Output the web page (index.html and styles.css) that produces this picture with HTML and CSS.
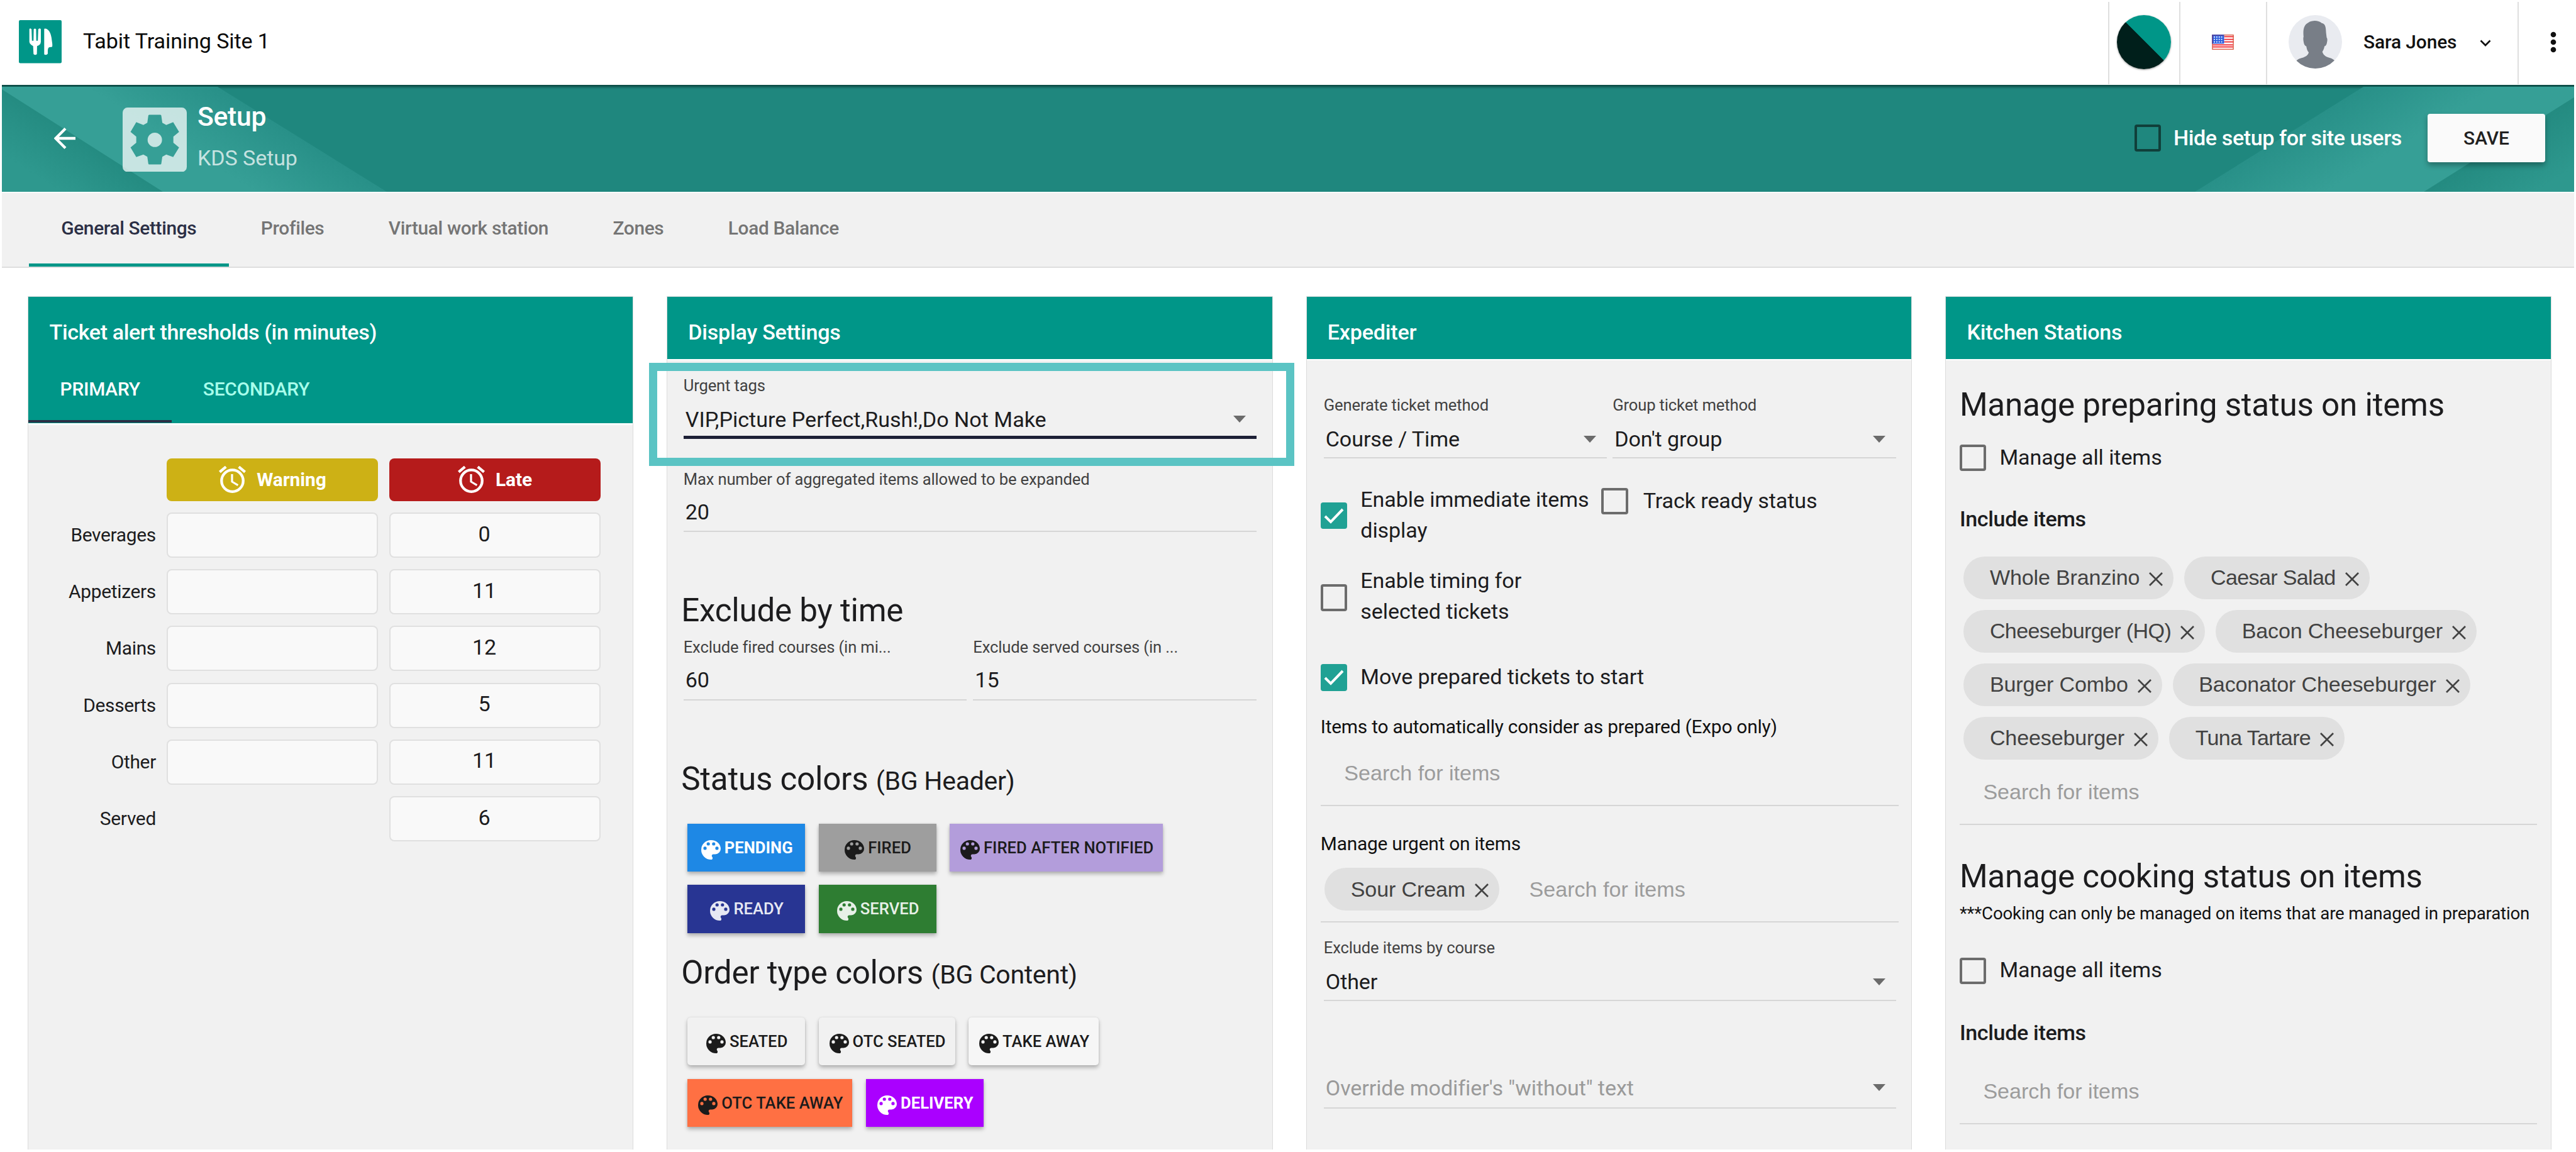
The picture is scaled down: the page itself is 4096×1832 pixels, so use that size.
FILE: index.html
```html
<!DOCTYPE html>
<html lang="en">
<head>
<meta charset="utf-8">
<title>KDS Setup</title>
<link rel="stylesheet" href="styles.css">
</head>
<body>
<svg class="sprite" aria-hidden="true">
  <symbol id="palette" viewBox="3 3 18 18"><path d="M17.5 12a1.5 1.5 0 1 1 0-3 1.5 1.5 0 0 1 0 3m-3-4a1.5 1.5 0 1 1 0-3 1.5 1.5 0 0 1 0 3m-5 0a1.5 1.5 0 1 1 0-3 1.5 1.5 0 0 1 0 3m-3 4a1.5 1.5 0 1 1 0-3 1.5 1.5 0 0 1 0 3M12 3a9 9 0 0 0 0 18 1.5 1.5 0 0 0 1.500-1.500c0-.39-.15-.74-.39-1-.23-.27-.38-.62-.38-1a1.500 1.500 0 0 1 1.500-1.500H16a5 5 0 0 0 5-5c0-4.42-4.03-8-9-8z"/></symbol>
  <symbol id="alarm" viewBox="2 2 20 20"><path d="M12 20a7 7 0 1 1 0-14 7 7 0 0 1 0 14m0-16a9 9 0 1 0 0 18 9 9 0 0 0 0-18m.5 4H11v6l4.750 2.850.75-1.230-4-2.370zM7.880 3.390 6.600 1.860 2 5.710l1.290 1.530zM22 5.720l-4.600-3.860-1.290 1.530 4.600 3.860z"/></symbol>
  <symbol id="close" viewBox="0 0 22 22"><path d="M1 1 21 21M21 1 1 21" fill="none" stroke="currentColor" stroke-width="2.700"/></symbol>
  <symbol id="check" viewBox="0 0 42 42"><path d="M7 22 16 31 35 11" fill="none" stroke="#fff" stroke-width="4"/></symbol>
</svg>

<header class="topbar">
  <svg class="logo" viewBox="35 43 216 217"><rect x="35" y="43" width="216" height="217" rx="7" fill="#009688"/><path fill="#fff" d="M88 89q3-8 11 0l2 58h8l1-58q6-7 12 0l1 58h8l2-58q8-8 13 0v64q0 10-10 17l-9 4-1 40q-8 8-17 0l-2-40-9-6q-10-8-10-16zM163 86q14-4 26 14 10 16 13 48 4 24 1 30l-16 2q-6 4-6 16v17q-7 9-18 3z"/></svg>
  <div class="site">Tabit Training Site 1</div>
  <div class="tools">
    <div class="tool tool-theme"><span class="theme"></span></div>
    <div class="tool tool-flag">
      <svg class="flag" viewBox="0 0 36 25"><rect width="36" height="25" fill="#fff"/><path d="M20 3.500h16M20 8h16M20 12h16M1 17h34M1 20.500h34" stroke="#f0232b" stroke-width="1.800"/><rect width="20" height="15" fill="#2b5fe0"/><path d="M3 4h16M3 8h16M3 12h16" stroke="#fff" stroke-width="1.800" stroke-dasharray="2 2"/><rect x=".7" y=".7" width="34.600" height="23.600" fill="none" stroke="#d9583f" stroke-width="1.400"/><path d="M.7 15V.7H20" fill="none" stroke="#3d3fa8" stroke-width="1.400"/></svg>
    </div>
    <div class="tool tool-user">
      <svg class="avatar" viewBox="960 46 271 271"><clipPath id="av"><circle cx="1095.500" cy="181.500" r="135.500"/></clipPath><g clip-path="url(#av)"><path fill="#e9ebf0" d="M960 46h271v271H960z"/><path fill="#787e87" d="M1036 155c-4-36 2-60 24-71 20-12 50-13 68 3 18 2 21 20 22 48l3 25c4 4 4 12 2 22-2 14-6 20-13 22-2 14-6 20-11 28 4 14 14 24 32 29 16 5 24 8 30 16v50H1000v-50c8-8 18-11 28-14 18-5 32-14 34-28-8-8-10-18-12-30-8-4-12-10-14-24-2-12-2-20 0-26z"/></g></svg>
      <span class="username">Sara Jones</span>
      <svg class="chev" viewBox="0 0 18 11"><path d="m1.500 1.500 7.500 7.500 7.500-7.500" fill="none" stroke="#111" stroke-width="2.700"/></svg>
    </div>
    <div class="tool tool-more"><svg class="dots" viewBox="0 0 10 34"><circle cx="5" cy="5" r="4.300"/><circle cx="5" cy="17" r="4.300"/><circle cx="5" cy="29" r="4.300"/></svg></div>
  </div>
</header>

<section class="banner">
  <svg class="rays" viewBox="0 0 4090 170" preserveAspectRatio="none">
    <defs>
      <linearGradient id="a" gradientUnits="userSpaceOnUse" x1="130" y1="85" x2="80" y2="162"><stop offset="0" stop-color="#248b81"/><stop offset="1" stop-color="#2e988e"/></linearGradient>
      <linearGradient id="b" gradientUnits="userSpaceOnUse" x1="478" y1="85" x2="418" y2="180"><stop offset="0" stop-color="#289088"/><stop offset="1" stop-color="#369f96"/></linearGradient>
      <linearGradient id="c" gradientUnits="userSpaceOnUse" x1="3621" y1="85" x2="3681" y2="180"><stop offset="0" stop-color="#289088"/><stop offset="1" stop-color="#369f96"/></linearGradient>
      <linearGradient id="d" gradientUnits="userSpaceOnUse" x1="3960" y1="103" x2="4010" y2="182"><stop offset="0" stop-color="#248b81"/><stop offset="1" stop-color="#2e988e"/></linearGradient>
    </defs>
    <path fill="url(#b)" d="M0 0H343L612 170H0z"/><path fill="url(#a)" d="M0 4 256 170H0z"/>
    <path fill="url(#c)" d="M3755 0H4090V170H3487z"/><path fill="url(#d)" d="M4090 17V170H3851z"/>
  </svg>
  <svg class="back" viewBox="0 0 34 34"><path d="M34 17H3M18 1.500 2.500 17 18 32.500" fill="none" stroke="#fff" stroke-width="4.300"/></svg>
  <svg class="gear" viewBox="562 485 325 326"><path fill="#fff" fill-opacity=".72" fill-rule="evenodd" d="M587 485H862a25 25 0 0 1 25 25V786a25 25 0 0 1-25 25H587a25 25 0 0 1-25-25V510a25 25 0 0 1 25-25zM697 521q-5 0-5 6l-5 35-20 11-36-14-29 49 29 24V663l-29 24 29 49 36-13 20 11 5 34q0 5 5 5h56q5 0 5-5l5-34 20-11 35 13 30-49-29-24V632l29-24-30-49-35 14-20-11-5-35q0-6-5-6zM725 612a36.500 36.500 0 1 1 0 73 36.500 36.500 0 0 1 0-73z"/></svg>
  <div class="titles"><div class="title">Setup</div><div class="subtitle">KDS Setup</div></div>
  <span class="box box-dark"></span><span class="hide-label">Hide setup for site users</span>
  <button class="save">SAVE</button>
</section>

<nav class="tabs">
  <a class="tab active">General Settings</a><a class="tab">Profiles</a><a class="tab">Virtual work station</a><a class="tab">Zones</a><a class="tab">Load Balance</a>
</nav>

<main class="cards">
  <section class="card">
    <div class="card-head card-head-tall">
      <div class="card-title">Ticket alert thresholds (in minutes)</div>
      <div class="subtabs"><span class="subtab on">PRIMARY</span><span class="subtab">SECONDARY</span></div>
    </div>
    <div class="thresholds">
      <span></span><div class="th warn"><svg class="ic-alarm"><use href="#alarm"/></svg>Warning</div><div class="th late"><svg class="ic-alarm"><use href="#alarm"/></svg>Late</div>
      <label>Beverages</label><div class="num"></div><div class="num">0</div>
      <label>Appetizers</label><div class="num"></div><div class="num">11</div>
      <label>Mains</label><div class="num"></div><div class="num">12</div>
      <label>Desserts</label><div class="num"></div><div class="num">5</div>
      <label>Other</label><div class="num"></div><div class="num">11</div>
      <label>Served</label><span></span><div class="num">6</div>
    </div>
  </section>

  <section class="card">
    <div class="card-head"><div class="card-title">Display Settings</div></div>
    <div class="card-body display">
      <div class="highlight"></div>
      <div class="field select urgent"><div class="label">Urgent tags</div><div class="value">VIP,Picture Perfect,Rush!,Do Not Make<i class="arrow"></i></div></div>
      <div class="field max"><div class="label">Max number of aggregated items allowed to be expanded</div><div class="value">20</div></div>
      <h2 class="exclude-h">Exclude by time</h2>
      <div class="pair exclude">
        <div class="field"><div class="label">Exclude fired courses (in mi...</div><div class="value">60</div></div>
        <div class="field"><div class="label">Exclude served courses (in ...</div><div class="value">15</div></div>
      </div>
      <h2 class="status-h">Status colors <small>(BG Header)</small></h2>
      <div class="swatches">
        <button class="sw pending"><svg><use href="#palette"/></svg>PENDING</button><button class="sw fired"><svg><use href="#palette"/></svg>FIRED</button><button class="sw notified"><svg><use href="#palette"/></svg>FIRED AFTER NOTIFIED</button>
        <button class="sw ready"><svg><use href="#palette"/></svg>READY</button><button class="sw served"><svg><use href="#palette"/></svg>SERVED</button>
      </div>
      <h2 class="order-h">Order type colors <small>(BG Content)</small></h2>
      <div class="swatches">
        <button class="sw plain"><svg><use href="#palette"/></svg>SEATED</button><button class="sw plain"><svg><use href="#palette"/></svg>OTC SEATED</button><button class="sw plain lighter"><svg><use href="#palette"/></svg>TAKE AWAY</button>
        <button class="sw otc"><svg><use href="#palette"/></svg>OTC TAKE AWAY</button><button class="sw delivery"><svg><use href="#palette"/></svg>DELIVERY</button>
      </div>
    </div>
  </section>

  <section class="card">
    <div class="card-head"><div class="card-title">Expediter</div></div>
    <div class="card-body expo">
      <div class="pair methods">
        <div class="field select"><div class="label">Generate ticket method</div><div class="value">Course / Time<i class="arrow"></i></div></div>
        <div class="field select"><div class="label">Group ticket method</div><div class="value">Don't group<i class="arrow"></i></div></div>
      </div>
      <div class="checks">
        <div class="check"><span class="box on"><svg><use href="#check"/></svg></span><span>Enable immediate items<br>display</span></div>
        <div class="check track"><span class="box"></span><span>Track ready status</span></div>
      </div>
      <div class="check timing"><span class="box"></span><span>Enable timing for<br>selected tickets</span></div>
      <div class="check move"><span class="box on"><svg><use href="#check"/></svg></span><span>Move prepared tickets to start</span></div>
      <div class="section-label auto-l">Items to automatically consider as prepared (Expo only)</div>
      <div class="chips auto"><span class="search">Search for items</span></div>
      <div class="section-label urgent-l">Manage urgent on items</div>
      <div class="chips urgent-chips"><span class="chip">Sour Cream<svg><use href="#close"/></svg></span><span class="search after-chip">Search for items</span></div>
      <div class="field select inset course"><div class="label">Exclude items by course</div><div class="value">Other<i class="arrow"></i></div></div>
      <div class="field select inset override"><div class="value">Override modifier's "without" text<i class="arrow"></i></div></div>
    </div>
  </section>

  <section class="card">
    <div class="card-head"><div class="card-title">Kitchen Stations</div></div>
    <div class="card-body kitchen">
      <h2 class="prep-h">Manage preparing status on items</h2>
      <div class="check prep-c"><span class="box"></span><span>Manage all items</span></div>
      <div class="include inc1">Include items</div>
      <div class="chips prep-chips">
        <span class="chip">Whole Branzino<svg><use href="#close"/></svg></span><span class="chip tight">Caesar Salad<svg><use href="#close"/></svg></span>
        <span class="chip tight">Cheeseburger (HQ)<svg><use href="#close"/></svg></span><span class="chip">Bacon Cheeseburger<svg><use href="#close"/></svg></span>
        <span class="chip">Burger Combo<svg><use href="#close"/></svg></span><span class="chip">Baconator Cheeseburger<svg><use href="#close"/></svg></span>
        <span class="chip">Cheeseburger<svg><use href="#close"/></svg></span><span class="chip tight">Tuna Tartare<svg><use href="#close"/></svg></span>
        <span class="search own-line">Search for items</span>
      </div>
      <h2 class="cook-h">Manage cooking status on items</h2>
      <div class="note">***Cooking can only be managed on items that are managed in preparation</div>
      <div class="check cook-c"><span class="box"></span><span>Manage all items</span></div>
      <div class="include inc2">Include items</div>
      <div class="chips cook-chips"><span class="search">Search for items</span></div>
    </div>
  </section>
</main>
</body>
</html>
```
FILE: styles.css
```css
* { box-sizing: border-box; }
html { background: #fff; }
body { margin: 0; padding: 0 3px; width: 4096px; height: 1832px; overflow: hidden; font-family: Roboto, sans-serif; font-size: 34.1px; letter-spacing: -.1px; color: #1c1c1e; background: #fff; }
svg { display: block; flex: none; fill: currentColor; }
.sprite { position: absolute; width: 0; height: 0; }
button { font: inherit; border: 0; }

/* Top bar */
.topbar { display: flex; align-items: flex-start; height: 134.500px; padding-left: 27px; }
.logo { width: 68px; height: 68.500px; margin-top: 32px; }
.site { margin: 45px 0 0 34px; line-height: 40px; color: #0a0a0a; }
.tools { display: flex; margin-left: auto; padding-top: 3px; height: 134px; }
.tool { display: flex; align-items: center; border-left: 2px solid #dfdfdf; padding-bottom: 4px; }
.tool-theme { width: 113px; padding-left: 12px; }
.theme { width: 86px; height: 86px; border-radius: 50%; background: linear-gradient(45deg, #001f1b 51.500%, #009688 51.800%); box-shadow: 0 1px 3px rgba(0,0,0,.4); }
.tool-flag { width: 138.500px; padding-left: 50px; }
.flag { width: 35px; height: 24px; }
.tool-user { width: 400px; padding-left: 34px; }
.avatar { width: 85px; height: 85px; }
.username { margin-left: 34px; font-size: 29.900px; font-weight: 500; color: #111; line-height: 36px; width: 151px; white-space: nowrap; }
.chev { width: 18px; height: 11px; margin-left: 34px; margin-top: 3px; }
.tool-more { width: 90px; padding-left: 50px; }
.dots { width: 10px; height: 34px; color: #111; }

/* Banner */
.banner { position: relative; display: flex; align-items: center; height: 170px; padding: 0 46px 0 83px; background: #1f877e; color: #fff; box-shadow: inset 0 4px 4px -1px rgba(0,40,36,.75); }
.rays { position: absolute; inset: 3px 0 0; width: 100%; height: 167px; }
.banner > :not(.rays) { position: relative; }
.back { width: 34px; height: 34px; }
.gear { width: 102px; height: 102.500px; margin: 5px 0 0 75px; }
.titles { margin-left: 17px; flex: 1; }
.title { font-size: 42.700px; font-weight: 500; line-height: 50px; margin-top: -3px; letter-spacing: -.3px; }
.subtitle { line-height: 40px; margin-top: 21px; margin-bottom: 5px; color: rgba(255,255,255,.72); }
.box { width: 42.500px; height: 42.500px; border: 4.500px solid #6c6c6c; border-radius: 4px; flex: none; }
.box.on { border: 0; background: #20a194; }
.box.on svg { width: 42px; height: 42px; }
.box-dark { border-color: #103f3a; }
.hide-label { margin-left: 20px; width: 372px; font-weight: 500; white-space: nowrap; letter-spacing: -.4px; padding-bottom: 2px; }
.save { width: 187px; height: 77px; margin-left: 32px; padding: 0; border-radius: 4px; background: #fafafa; color: #212121; font-size: 29.900px; font-weight: 500; box-shadow: 0 5px 8px rgba(0,0,0,.3); }

/* Main tabs */
.tabs { display: flex; height: 121.500px; padding-left: 43px; background: #f1f1f1; border-top: 2px solid #fff; border-bottom: 2px solid #dedede; }
.tab { display: flex; align-items: center; padding: 4px 51.200px 3px; font-size: 29.900px; font-weight: 500; letter-spacing: -.35px; line-height: 36px; color: #757575; border-bottom: 5px solid transparent; }
.tab.active { color: #2b2f45; border-color: #009688; }

/* Cards */
.cards { display: grid; grid-template-columns: repeat(4, 963.500px); column-gap: 53.100px; margin: 45px 0 0 40.600px; height: 1357px; }
.card { background: #f1f1f1; border: solid #dcdcdc; border-width: 1px 1px 0; height: 1357px; }
.card-head { height: 98.500px; padding: 36px 33px 0; background: #009688; color: #fff; }
.card-head-tall { height: 200.500px; padding: 36px 0 0; }
.card-title { font-weight: 500; line-height: 40px; letter-spacing: -.2px; }
.card-head-tall .card-title { padding-left: 34px; height: 62px; letter-spacing: -.38px; }
.subtabs { display: flex; height: 102px; }
.subtab { display: flex; align-items: center; padding: 0 50px 1px; font-size: 29.900px; font-weight: 500; letter-spacing: -.25px; color: #a7ffeb; border-bottom: 4px solid transparent; }
.subtab.on { color: #fff; border-color: #2b2f45; padding-left: 51px; }
.thresholds { display: grid; grid-template-columns: 203.400px 336px 336px; column-gap: 17.500px; row-gap: 18.200px; grid-auto-rows: 72px; grid-template-rows: 68.400px; padding-top: 53px; border-top: 3px solid #fff; }
.thresholds label { align-self: center; text-align: right; font-size: 29.900px; letter-spacing: -.3px; padding-bottom: 1px; }
.th { display: flex; align-items: center; justify-content: center; border-radius: 8px; color: #fff; font-size: 29.900px; font-weight: 700; }
.warn { background: #cdb115; }
.late { background: #b51b1b; }
.ic-alarm { width: 43px; height: 43px; margin-right: 17px; overflow: visible; }
.num { display: flex; align-items: center; justify-content: center; padding: 0 34px 5px 0; background: #f9f9f9; border: 2px solid #e0e0e0; border-radius: 8px; }
.card-body { position: relative; border-top: 2px solid #fff; display: flow-root; }
h2 { margin: 0; font-size: 51.200px; font-weight: 400; line-height: 60px; height: 60px; letter-spacing: -.25px; white-space: nowrap; }
h2 small { font-size: 41px; letter-spacing: -.3px; }

/* Fields */
.label { font-size: 25.600px; line-height: 30px; letter-spacing: -.15px; color: #424242; white-space: nowrap; }
.value { display: flex; justify-content: space-between; align-items: center; line-height: 40px; margin-top: 17px; padding-left: 3px; height: 50.500px; padding-bottom: 10.500px; white-space: nowrap; }
.field { border-bottom: 2px solid #d6d6d6; }
.select .value { margin-top: 19px; height: 49px; padding-bottom: 9px; }
.arrow { width: 0; height: 0; border: 10px solid transparent; border-top: 11px solid #6b6b6b; border-bottom: 0; margin-right: 17px; }
.pair { display: grid; grid-template-columns: 1fr 1fr; column-gap: 8.800px; }

.display { padding: 0 25px 0 24px; }
.display .field { margin-left: 1.500px; }
.highlight { position: absolute; left: -29px; top: 4px; width: 1025.500px; height: 164px; border: 13.300px solid #5bc4c4; }
.field.urgent { margin-top: 25px; border-bottom: 5px solid #1d1f36; }
.urgent .value { height: 46px; padding-bottom: 6px; letter-spacing: 0; }
.field.max { margin-top: 49px; }
.exclude-h { margin-top: 94.500px; margin-left: -2px; }
.exclude { margin-top: 13.500px; }
.status-h { margin-top: 95px; margin-left: -2px; }
.order-h { margin-top: 33.500px; margin-left: -2px; }
.swatches { display: flex; flex-wrap: wrap; gap: 21.300px 21.400px; margin: 41px 0 0 8px; }
.sw { display: flex; align-items: center; justify-content: center; min-width: 187px; height: 76.400px; padding: 0 15px 0 17px; font-size: 25.600px; font-weight: 500; letter-spacing: .05px; white-space: nowrap; color: #1b1b1b; box-shadow: 0 4px 6px rgba(0,0,0,.26), 0 0 3px rgba(0,0,0,.1); }
.sw svg { width: 31px; height: 31px; margin-right: 6px; margin-top: 7px; }
.pending { background: #1e88e5; color: #fff; font-weight: 700; }
.fired { background: #9e9e9e; }
.notified { background: #b39ddb; }
.ready { background: #283593; color: #e6e8f3; }
.served { background: #2e7d32; color: #e7f0e7; }
.plain { background: #f1f1f1; border-radius: 5px; }
.lighter { background: #f6f6f6; }
.otc { background: #ff7043; }
.delivery { background: #aa00ff; color: #fff; font-weight: 700; }

/* Checkboxes and chips */
.check { display: flex; align-items: center; line-height: 49px; }
.check .box { margin: 2px 21px 0 0; }
.checks { display: flex; align-items: flex-start; }
.chips { display: flex; flex-wrap: wrap; gap: 16.950px 17.100px; padding: 0 6.500px 16.500px; border-bottom: 2px solid #d6d6d6; font-family: "Liberation Sans", Arial, sans-serif; }
.chip { display: flex; align-items: center; height: 68.200px; padding: 0 17px 0 41.500px; border-radius: 34px; background: #e0e0e0; color: #424242; white-space: nowrap; letter-spacing: -.15px; }
.chip.tight { letter-spacing: -.65px; }
.chip svg { width: 22px; height: 22px; margin: 4px 0 0 15px; }
.search { display: flex; align-items: center; height: 68.200px; padding-left: 31px; color: #9c9c9c; letter-spacing: 0; }
.search.own-line { flex-basis: 100%; }
.section-label { font-size: 29.900px; line-height: 36px; letter-spacing: -.24px; color: #111; }

.expo { padding: 0 20.500px 0 22px; }
.methods { margin: 56.500px 4px 0 5px; }
.checks { margin-top: 41px; }
.checks .check:first-child { width: 446.500px; }
.track { margin-top: 2.400px; }
.track .box { margin-right: 24px; margin-top: 0; }
.timing { margin-top: 31px; }
.timing .box { margin-top: 5px; }
.move { margin-top: 55px; }
.auto-l { margin-top: 36.500px; }
.auto { margin-top: 22.200px; }
.urgent-l { margin-top: 41.800px; }
.urgent-chips { margin-top: 20px; }
.search.after-chip { padding-left: 30.500px; }
.inset { margin-left: 5px; margin-right: 4px; }
.course { margin-top: 25.500px; }
.override { margin-top: 117.500px; }
.select.override .value { margin-top: 0; color: #9a9a9a; height: 51px; padding-bottom: 11px; }

.kitchen { padding: 0 22px 0 21.500px; }
.prep-h { margin-top: 41.500px; }
.prep-c { margin-top: 28.500px; }
.include { line-height: 40px; font-weight: 500; letter-spacing: -.35px; }
.inc1 { margin-top: 53px; }
.prep-chips { margin-top: 40px; }
.cook-h { margin-top: 52px; }
.note { font-size: 27.700px; line-height: 33px; margin-top: 12.800px; white-space: nowrap; letter-spacing: -.19px; color: #111; }
.cook-c { margin-top: 48.800px; }
.inc2 { margin-top: 55px; }
.cook-chips { margin-top: 38.700px; }
```
